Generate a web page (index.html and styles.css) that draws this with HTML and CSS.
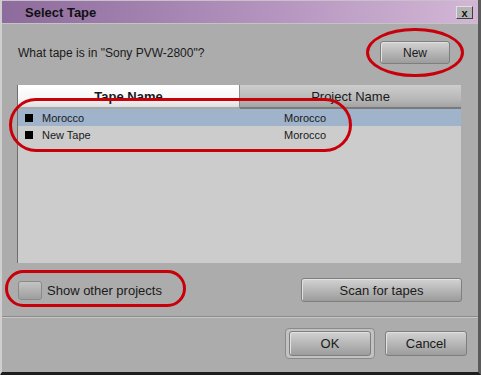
FILE: index.html
```html
<!DOCTYPE html>
<html lang="en">
<head>
    <meta charset="UTF-8">
    <meta name="viewport" content="width=device-width, initial-scale=1.0">
    <title>Select Tape</title>
    <link rel="stylesheet" href="styles.css">
</head>
<body>
    <div class="window">
        <div class="titlebar">
            <span class="title">Select Tape</span>
            <button class="close-btn">x</button>
        </div>
        <div class="content">
            <div class="prompt-row">
                <span class="prompt">What tape is in "Sony PVW-2800"?</span>
                <button class="btn new-btn">New</button>
            </div>

            <div class="tape-list">
                <div class="list-header">
                    <div class="col-head active">Tape Name</div>
                    <div class="col-head">Project Name</div>
                </div>
                <div class="list-row selected">
                    <span class="bullet"></span>
                    <span class="tape-name">Morocco</span>
                    <span class="project-name">Morocco</span>
                </div>
                <div class="list-row">
                    <span class="bullet"></span>
                    <span class="tape-name">New Tape</span>
                    <span class="project-name">Morocco</span>
                </div>
            </div>

            <div class="options-row">
                <label class="check">
                    <span class="check-box"></span>
                    Show other projects
                </label>
                <button class="btn scan-btn">Scan for tapes</button>
            </div>
        </div>

        <div class="separator"></div>

        <div class="footer">
            <div class="default-ring">
                <button class="btn ok-btn">OK</button>
            </div>
            <button class="btn cancel-btn">Cancel</button>
        </div>

        <!-- red callout marks drawn over the dialog -->
        <div class="callout callout-new"></div>
        <div class="callout callout-rows"></div>
        <div class="callout callout-check"></div>
    </div>
</body>
</html>
```

FILE: styles.css
```css
body {
    margin: 0;
    background-color: #acacac;
    font-family: "Liberation Sans", Arial, sans-serif;
    font-size: 12px;
    color: #1a1a1a;
}

.window {
    position: relative;
    width: 481px;
    height: 375px;
    box-sizing: border-box;
    background-color: #acacac;
    border-left: 2px solid #cfcfcf;
    border-right: 3px solid #5a5a5a;
    border-bottom: 3px solid #1e1e1e;
    overflow: hidden;
}

.titlebar {
    height: 22px;
    display: flex;
    align-items: center;
    justify-content: space-between;
    padding: 0 5px 0 23px;
    background: linear-gradient(to right, #8d6b9c, #b08fbb 50%, #d3b6d6);
    border-top: 1px solid #c9c0cb;
    border-bottom: 1px solid #c4c4c4;
}

.title {
    font-weight: bold;
    font-size: 13px;
    color: #111;
}

.close-btn {
    width: 17px;
    height: 13px;
    padding: 0;
    margin-top: 1px;
    border: 1px solid;
    border-color: #e0e0e0 #404040 #404040 #e0e0e0;
    background-color: #b4b4b4;
    font-family: "Liberation Sans", Arial, sans-serif;
    font-size: 11px;
    font-weight: bold;
    line-height: 10px;
    color: #111;
}

.content {
    padding: 0 16px 0 15px;
}

.prompt-row {
    display: flex;
    justify-content: space-between;
    align-items: center;
    margin-top: 17px;
    height: 23px;
}

.prompt {
    padding-left: 1px;
}

.btn {
    font-family: "Liberation Sans", Arial, sans-serif;
    font-size: 12px;
    color: #1a1a1a;
    background: linear-gradient(to bottom, #d2d2d2, #b4b4b4 55%, #9c9c9c);
    border: 1px solid #7e7e7e;
    border-radius: 3px;
    box-shadow: inset 1px 1px 0 #e2e2e2;
    padding: 0;
}

.new-btn {
    width: 70px;
    height: 23px;
    margin-right: 12px;
}

.tape-list {
    margin-top: 21px;
    height: 178px;
    background-color: #cccccc;
    border-left: 1px solid #6e6e6e;
    margin-right: 1px;
}

.list-header {
    display: flex;
    height: 24px;
}

.col-head {
    flex: 1;
    display: flex;
    align-items: center;
    justify-content: center;
    background: linear-gradient(to bottom, #cdcdcd, #b9b9b9 60%, #a3a3a3);
    border-bottom: 2px solid #7a7a7a;
    box-sizing: border-box;
    font-size: 13px;
}

.col-head.active {
    background: linear-gradient(to bottom, #ffffff, #f7f7f7 60%, #dedede);
    border-bottom: 2px solid #a9a9a9;
    border-right: 1px solid #8c8c8c;
    font-weight: bold;
}

.list-row {
    display: flex;
    align-items: center;
    height: 17px;
    padding-left: 7px;
    font-size: 11px;
}

.list-row.selected {
    background-color: #9fb3cb;
}

.bullet {
    width: 8px;
    height: 8px;
    background-color: #000;
    margin-right: 9px;
}

.tape-name {
    width: 242px;
}

.options-row {
    display: flex;
    justify-content: space-between;
    align-items: center;
    margin-top: 15px;
    height: 24px;
}

.check {
    display: flex;
    align-items: center;
    gap: 5px;
    font-size: 13px;
}

.check-box {
    width: 22px;
    height: 17px;
    border: 1px solid #8a8a8a;
    border-radius: 3px;
    background: linear-gradient(to bottom, #c4c4c4, #9e9e9e);
    margin-left: 1px;
}

.scan-btn {
    width: 161px;
    height: 24px;
    font-size: 13px;
}

.separator {
    margin-top: 14px;
    height: 1px;
    background-color: #8c8c8c;
    border-bottom: 1px solid #c6c6c6;
}

.footer {
    display: flex;
    justify-content: flex-end;
    align-items: center;
    gap: 10px;
    margin-top: 10px;
    padding-right: 11px;
}

.default-ring {
    padding: 2px 3px;
    border: 1px solid #8a8a8a;
    border-radius: 4px;
    background-color: #c2c2c2;
}

.ok-btn,
.cancel-btn {
    width: 82px;
    height: 25px;
    font-size: 13px;
    display: block;
}

.callout {
    position: absolute;
    border: 3px solid #c8000a;
    box-sizing: border-box;
}

.callout-new {
    left: 364px;
    top: 28px;
    width: 98px;
    height: 49px;
    border-radius: 49px / 25px;
}

.callout-rows {
    left: 7px;
    top: 98px;
    width: 343px;
    height: 54px;
    border-radius: 28px;
}

.callout-check {
    left: 3px;
    top: 270px;
    width: 181px;
    height: 37px;
    border-radius: 19px;
}
```
